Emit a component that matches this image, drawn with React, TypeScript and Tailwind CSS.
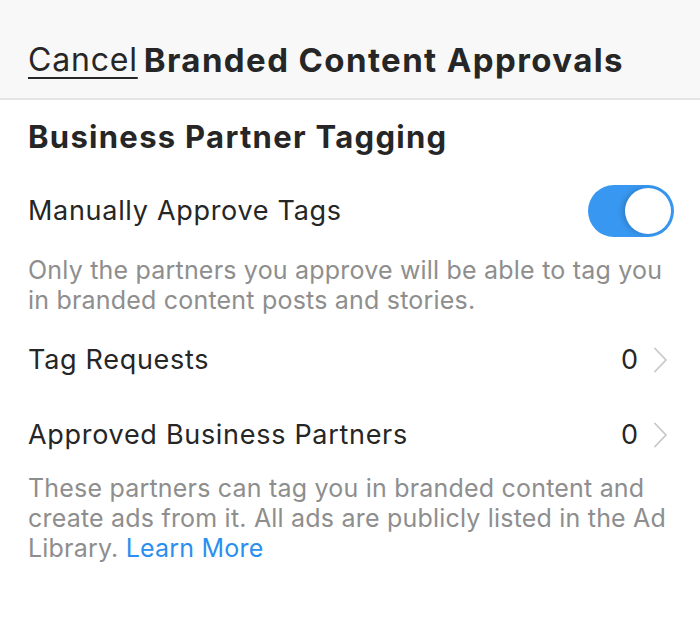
import { useState } from 'react';

function Chevron() {
  return (
    <svg width="16" height="28" viewBox="0 0 16 28" fill="none" className="ml-[14px]">
      <path d="M3 2.5 L14 14 L3 25.5" stroke="#c7c7cc" strokeWidth="1.8" strokeLinecap="round" strokeLinejoin="round" />
    </svg>
  );
}

function Toggle({ on, onChange }: { on: boolean; onChange: () => void }) {
  return (
    <button
      onClick={onChange}
      className={`relative w-[86px] h-[52px] rounded-full ${on ? 'bg-[#3897f0]' : 'bg-[#e5e5ea]'}`}
      aria-label="Manually Approve Tags"
    >
      <span
        className={`absolute top-[3px] w-[46px] h-[46px] rounded-full bg-white shadow-[-3px_0_5px_rgba(0,0,0,0.15)] ${on ? 'left-[37px]' : 'left-[3px]'}`}
      />
    </button>
  );
}

export default function App() {
  const [manual, setManual] = useState(true);

  const rows = [
    { name: 'Tag Requests', count: 0 },
    { name: 'Approved Business Partners', count: 0 },
  ];

  return (
    <div className="w-[700px] h-[643px] bg-white text-[#262626] font-['Inter',sans-serif] overflow-hidden">
      {/* Header */}
      <div className="h-[100px] bg-[#f8f8f8] border-b-2 border-[#e4e4e4] pt-[40px] px-[28px] flex">
        <a href="#" className="text-[32px] leading-[40px] underline underline-offset-[6px] decoration-2 text-[#262626] tracking-[0.8px]">
          Cancel
        </a>
        <h1 className="ml-[6px] text-[33px] leading-[40px] font-bold tracking-[1.4px]">Branded Content Approvals</h1>
      </div>

      <div className="pl-[28px] pr-[26px]">
        <h2 className="mt-[17px] text-[31px] leading-[40px] font-bold tracking-[1.3px]">Business Partner Tagging</h2>

        <div className="mt-[28px] flex items-center justify-between">
          <span className="text-[27px] leading-[52px] tracking-[0.7px]">Manually Approve Tags</span>
          <Toggle on={manual} onChange={() => setManual(!manual)} />
        </div>

        <p className="mt-[18px] text-[25px] leading-[30px] text-[#8e8e8e] tracking-[0.2px]">
          Only the partners you approve will be able to tag you in branded content posts and stories.
        </p>

        <div className="mt-[29px] flex flex-col gap-[43px]">
          {rows.map((r) => (
            <div key={r.name} className="flex items-center justify-between pr-[6px] h-[32px]">
              <span className="text-[27px] leading-[32px] tracking-[0.7px]">{r.name}</span>
              <div className="flex items-center">
                <span className="text-[27px] leading-[32px]">{r.count}</span>
                <Chevron />
              </div>
            </div>
          ))}
        </div>

        <p className="mt-[22px] text-[25px] leading-[30px] text-[#8e8e8e] tracking-[0.2px] whitespace-nowrap">
          These partners can tag you in branded content and
          <br />
          create ads from it. All ads are publicly listed in the Ad
          <br />
          Library. <a href="#" className="text-[#2b8ff0]">Learn More</a>
        </p>
      </div>
    </div>
  );
}
